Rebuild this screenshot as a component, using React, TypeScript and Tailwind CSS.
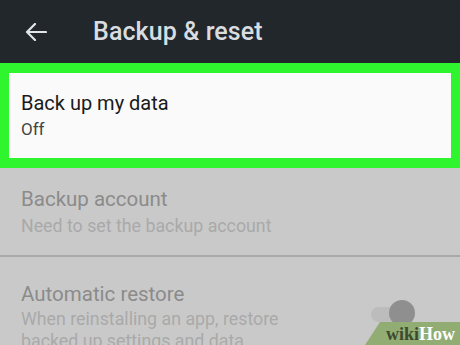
import React from "react";

export default function App() {
  return (
    <div className="w-[460px] h-[345px] overflow-hidden bg-[#c9c9c9] relative" style={{ fontFamily: "Roboto, 'Liberation Sans', sans-serif" }}>
      <div className="h-[63px] bg-[#22272c] flex items-center">
        <svg width="22" height="18" viewBox="0 0 22 18" className="ml-[25px]">
          <path d="M21 9H2M10 1L2 9l8 8" fill="none" stroke="#e3e6e8" strokeWidth="2.2" strokeLinecap="round" strokeLinejoin="round" />
        </svg>
        <div className="ml-[46px] text-[25px] font-medium text-[#d9dde0] leading-none tracking-[0.1px]">Backup &amp; reset</div>
      </div>
      <div className="h-[105px] bg-[#2ef52e] px-[9px] py-[10px]">
        <div className="h-full bg-[#fafafa] pl-[12px] pt-[18px]">
          <div className="text-[20px] text-[#1a1a1a] leading-[24px]">Back up my data</div>
          <div className="text-[17px] text-[#444] leading-[22px] mt-[3px]">Off</div>
        </div>
      </div>
      <div className="h-[89px] pl-[21px] pt-[19px] border-b-2 border-[#a9a9a9]">
        <div className="text-[20.5px] text-[#8b8b8b] leading-[24px]">Backup account</div>
        <div className="text-[17.8px] text-[#a9a9a9] leading-[22px] mt-[4px]">Need to set the backup account</div>
      </div>
      <div className="pl-[21px] pt-[25px] flex">
        <div>
          <div className="text-[20.5px] text-[#8b8b8b] leading-[24px]">Automatic restore</div>
          <div className="text-[17.8px] text-[#a9a9a9] leading-[22px] mt-[2px] w-[300px]">When reinstalling an app, restore backed up settings and data</div>
        </div>
      </div>
      <div className="absolute left-[371px] top-[307px] w-[34px] h-[15px] rounded-full bg-[#bcbcbc]" />
      <div className="absolute left-[389px] top-[300px] w-[26px] h-[26px] rounded-full bg-[#8f8f8f]" />
      <div className="absolute left-[365px] top-[322px] w-[95px] h-[23px] bg-[#91ad74] [clip-path:polygon(15px_0,100%_0,100%_100%,0_100%)] flex items-center pl-[21px]">
        <span className="text-[18px] font-bold leading-none text-[#3d4a2e]" style={{ fontFamily: "'Liberation Serif', serif" }}>wiki</span>
        <span className="text-[18px] font-bold leading-none text-white" style={{ fontFamily: "'Liberation Serif', serif" }}>How</span>
      </div>
    </div>
  );
}
